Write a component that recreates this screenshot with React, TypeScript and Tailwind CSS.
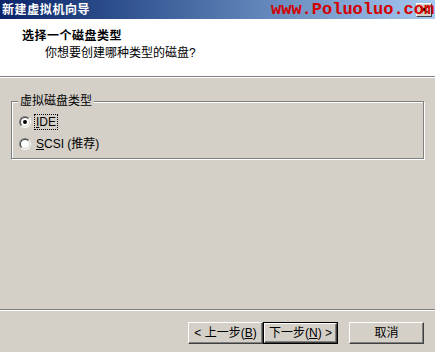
import React from "react"

const font = "font-['SimSun','Liberation_Sans','Noto_Sans_CJK_SC',sans-serif]"

function Radio({ checked }: { checked?: boolean }) {
  return (
    <span className="relative flex h-[12px] w-[12px] shrink-0 items-center justify-center rounded-full border border-t-[#808080] border-l-[#808080] border-r-white border-b-white">
      <span className="flex h-[10px] w-[10px] items-center justify-center rounded-full border border-t-[#404040] border-l-[#404040] border-r-[#d4d0c8] border-b-[#d4d0c8] bg-white">
        {checked && <span className="h-[4px] w-[4px] rounded-full bg-black" />}
      </span>
    </span>
  )
}

function Button({ children, primary }: { children: React.ReactNode; primary?: boolean }) {
  const face = (
    <div className="flex h-full w-full items-center justify-center border border-t-white border-l-white border-r-[#404040] border-b-[#404040] bg-[#d4d0c8] text-[12px] text-black shadow-[inset_-1px_-1px_0_#808080,inset_1px_1px_0_#d4d0c8]">
      {children}
    </div>
  )
  if (primary) {
    return <div className="h-[22px] w-[75px] border border-black">{face}</div>
  }
  return <div className="h-[22px] w-[75px]">{face}</div>
}

export default function App() {
  return (
    <div className={`relative flex h-[352px] w-[435px] flex-col overflow-hidden bg-[#d4d0c8] ${font}`}>
      {/* title bar */}
      <div className="flex h-[19px] items-center justify-between bg-gradient-to-r from-[#0a246a] to-[#a6caf0] pl-[2px] pr-[3px]">
        <span className="text-[12px] font-bold leading-none tracking-[0.6px] text-white">新建虚拟机向导</span>
        <span className="flex h-[14px] w-[16px] items-center justify-center border border-t-white border-l-white border-r-[#404040] border-b-[#404040] bg-[#d4d0c8]">
          <svg width="8" height="7" viewBox="0 0 8 7">
            <path d="M0.5 0.5 L7.5 6.5 M7.5 0.5 L0.5 6.5" stroke="#000" strokeWidth="1.6" />
          </svg>
        </span>
      </div>
      <span className="absolute left-[271px] top-[1px] font-['Liberation_Mono',monospace] text-[17px] font-bold leading-[18px] text-[#d40000]">
        www.Poluoluo.com
      </span>

      {/* header */}
      <div className="flex h-[57px] flex-col bg-white pt-[9px]">
        <div className="pl-[22px] text-[12px] font-bold leading-[16px] tracking-[0.5px] text-black">选择一个磁盘类型</div>
        <div className="mt-[1px] pl-[45px] text-[12px] leading-[16px] text-black">你想要创建哪种类型的磁盘?</div>
      </div>
      <div className="h-[2px] border-t border-t-[#808080] border-b border-b-white" />

      {/* body */}
      <div className="flex-1 px-[11px]">
        <fieldset className="mt-[16px] border border-[#808080] px-0 pb-[6px] pt-0 shadow-[inset_1px_1px_0_#fff,1px_1px_0_#fff]">
          <legend className="ml-[6px] bg-[#d4d0c8] px-[2px] text-[12px] leading-[14px] text-black">虚拟磁盘类型</legend>
          <div className="mt-[6px] flex h-[16px] items-center pl-[7px]">
            <Radio checked />
            <span className="ml-[4px] px-[1px] text-[12px] leading-[14px] text-black outline outline-1 outline-dotted outline-black">
              <u>I</u>DE
            </span>
          </div>
          <div className="mt-[6px] flex h-[16px] items-center pl-[7px]">
            <Radio />
            <span className="ml-[5px] text-[12px] leading-[14px] text-black">
              <u>S</u>CSI (推荐)
            </span>
          </div>
        </fieldset>
      </div>

      {/* footer */}
      <div className="h-[2px] border-t border-t-[#808080] border-b border-b-white" />
      <div className="flex justify-end pb-[8px] pr-[11px] pt-[11px]">
        <Button>
          &lt; 上一步(<u>B</u>)
        </Button>
        <Button primary>
          下一步(<u>N</u>) &gt;
        </Button>
        <div className="w-[11px]" />
        <Button>取消</Button>
      </div>
    </div>
  )
}
